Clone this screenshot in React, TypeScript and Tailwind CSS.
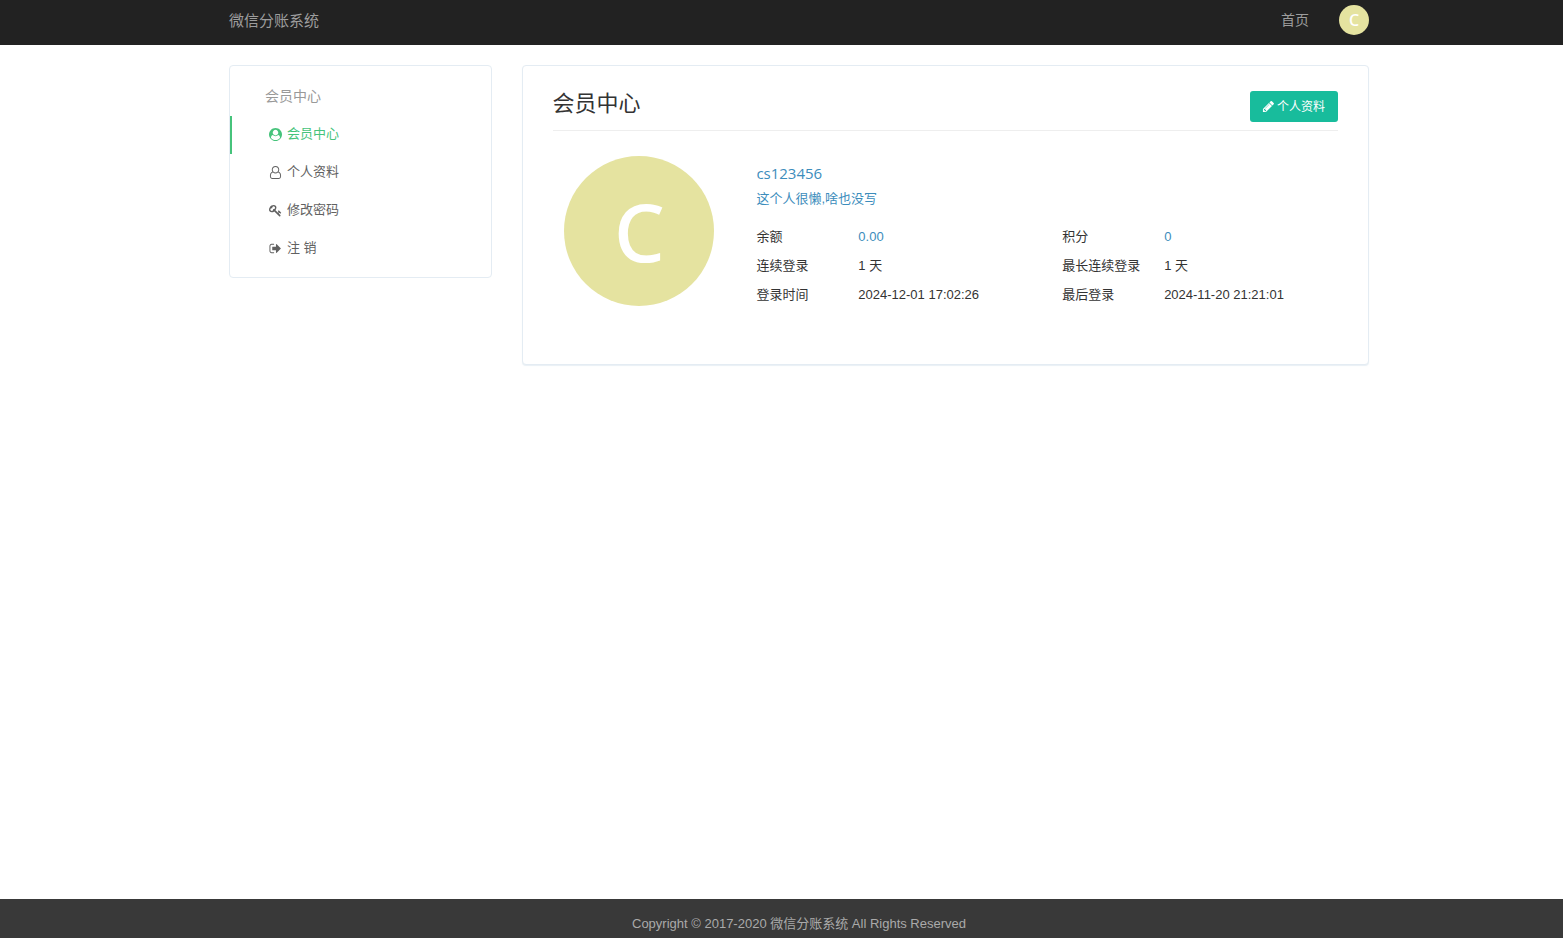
import React from 'react';
import clsx from 'clsx';

const ICONS = {
  userCircle:
    'M1523 1339q-22-155-87.5-257.5t-184.5-118.5q-67 74-159.5 115.5t-195.5 41.5-195.5-41.5-159.5-115.5q-119 16-184.5 118.5t-87.5 257.5q106 150 271 237.5t356 87.5 356-87.5 271-237.5zm-243-699q0-159-112.5-271.5t-271.5-112.5-271.5 112.5-112.5 271.5 112.5 271.5 271.5 112.5 271.5-112.5 112.5-271.5zm512 256q0 182-71 347.5t-190.5 286-285.5 191.5-349 71q-182 0-348-71t-286-191-191-286-71-348 71-348 191-286 286-191 348-71 348 71 286 191 191 286 71 348z',
  user:
    'M1329 784q47 14 89.5 38t89 73 79.5 115.5 55 172 22 236.5q0 154-100 263.5t-241 109.5h-854q-141 0-241-109.5t-100-263.5q0-131 22-236.5t55-172 79.5-115.5 89-73 89.5-38q-79-125-79-272 0-104 40.5-198.5t109.5-163.5 163.5-109.5 198.5-40.5 198.5 40.5 163.5 109.5 109.5 163.5 40.5 198.5q0 147-79 272zm-433-656q-159 0-271.5 112.5t-112.5 271.5 112.5 271.5 271.5 112.5 271.5-112.5 112.5-271.5-112.5-271.5-271.5-112.5zm427 1536q88 0 150.5-71.5t62.5-173.5q0-239-78.5-377t-225.5-145q-145 127-336 127t-336-127q-147 7-225.5 145t-78.5 377q0 102 62.5 173.5t150.5 71.5h854z',
  key:
    'M832 512q0-80-56-136t-136-56-136 56-56 136q0 42 19 83-41-19-83-19-80 0-136 56t-56 136 56 136 136 56 136-56 56-136q0-42-19-83 41 19 83 19 80 0 136-56t56-136zm851 704q0 17-49 66t-66 49q-9 0-28.5-16t-36.5-33-38.5-40-24.5-26l-96 96 220 220q28 28 28 68 0 42-39 81t-81 39q-40 0-68-28l-671-671q-176 131-365 131-163 0-265.5-102.5t-102.5-265.5q0-160 95-313t248-248 313-95q163 0 265.5 102.5t102.5 265.5q0 189-131 365l355 355 96-96q-3-3-26-24.5t-40-38.5-33-36.5-16-28.5q0-17 49-66t66-49q13 0 23 10 6 6 46 44.5t82 79.5 86.5 86 73 78 28.5 41z',
  signOut:
    'M704 1440q0 4 1 20t.5 26.5-3 23.5-10 19.5-20.5 6.5h-320q-119 0-203.5-84.5t-84.5-203.5v-704q0-119 84.5-203.5t203.5-84.5h320q13 0 22.5 9.5t9.5 22.5q0 4 1 20t.5 26.5-3 23.5-10 19.5-20.5 6.5h-320q-66 0-113 47t-47 113v704q0 66 47 113t113 47h312l11.5 1 11.5 3 8 5.5 7 9 2 13.5zm928-544q0 26-19 45l-544 544q-19 19-45 19t-45-19-19-45v-288h-448q-26 0-45-19t-19-45v-384q0-26 19-45t45-19h448v-288q0-26 19-45t45-19 45 19l544 544q19 19 19 45z',
  pencil:
    'M491 1536l91-91-235-235-91 91v107h128v128h107zm523-928q0-22-22-22-10 0-17 7l-542 542q-7 7-7 17 0 22 22 22 10 0 17-7l542-542q7-7 7-17zm-54-192l416 416-832 832h-416v-416zm683 96q0 53-37 90l-166 166-416-416 166-165q36-38 90-38 53 0 91 38l235 234q37 39 37 91z',
};

type IconName = keyof typeof ICONS;

interface MenuItem {
  icon: IconName;
  label: string;
  active?: boolean;
}

interface Stat {
  label: string;
  value: string;
  link?: boolean;
}

const MENU: MenuItem[] = [
  { icon: 'userCircle', label: '会员中心', active: true },
  { icon: 'user', label: '个人资料' },
  { icon: 'key', label: '修改密码' },
  { icon: 'signOut', label: '注 销' },
];

const STATS: Stat[] = [
  { label: '余额', value: '0.00', link: true },
  { label: '积分', value: '0', link: true },
  { label: '连续登录', value: '1 天' },
  { label: '最长连续登录', value: '1 天' },
  { label: '登录时间', value: '2024-12-01 17:02:26' },
  { label: '最后登录', value: '2024-11-20 21:21:01' },
];

const Icon = ({ name, className }: { name: IconName; className?: string }) => (
  <svg viewBox="0 0 1792 1792" fill="currentColor" aria-hidden="true" className={clsx('shrink-0', className)}>
    <path d={ICONS[name]} />
  </svg>
);

const Container = ({ className, children }: { className?: string; children: React.ReactNode }) => (
  <div className="pl-[35px]">
    <div className={clsx('mx-auto max-w-[1170px] px-[15px]', className)}>{children}</div>
  </div>
);

const Avatar = ({ className }: { className?: string }) => (
  <span
    className={clsx(
      "flex items-center justify-center rounded-full bg-[#e5e3a0] font-['Noto_Sans','Open_Sans',sans-serif] leading-none font-medium text-white",
      className
    )}
  >
    C
  </span>
);

const Navbar = () => (
  <header className="bg-[#222222] text-[#9d9d9d]">
    <Container className="flex h-[45px] items-start justify-between">
      <a href="#" className="text-[15px] leading-[42px]">微信分账系统</a>
      <nav className="flex gap-[30px]">
        <a href="#" className="text-sm leading-10">首页</a>
        <a href="#" aria-label="cs123456" className="pt-[5px]">
          <Avatar className="size-[30px] text-base" />
        </a>
      </nav>
    </Container>
  </header>
);

const Sidebar = () => (
  <aside className="self-start rounded border border-[#e4ecf3] bg-white pt-3 pb-[9px]">
    <h2 className="mb-[2px] pl-[35px] text-sm leading-9 text-[#999999]">会员中心</h2>
    <ul>
      {MENU.map((item) => (
        <li key={item.label}>
          <a
            href="#"
            className={clsx(
              'flex h-[38px] items-center gap-[5px] border-l-2 pb-[2px] pl-[37px]',
              item.active ? 'border-[#46c37b] text-[#46c37b]' : 'border-transparent text-[#616161]'
            )}
          >
            <Icon name={item.icon} className="size-[13px]" />
            {item.label}
          </a>
        </li>
      ))}
    </ul>
  </aside>
);

const Profile = () => (
  <section className="col-span-3 rounded-sm border border-[#e4ecf3] bg-white px-[30px] pt-[25px] pb-[55px] shadow-[0_1px_1px_rgba(228,236,243,0.8)]">
    <div className="flex items-start justify-between border-b border-[#eeeeee] pb-2">
      <h1 className="text-[22px] leading-[26px] text-[#333333]">会员中心</h1>
      <a
        href="#"
        className="flex h-[31px] items-center gap-[2px] rounded-[3px] bg-[#18bc9c] pr-[13px] pl-3 text-xs text-white"
      >
        <Icon name="pencil" className="size-[13px]" />
        个人资料
      </a>
    </div>

    <div className="-mx-[15px] mt-[25px] grid grid-cols-4">
      <div className="flex justify-center">
        <a href="#" aria-label="头像" className="self-start">
          <Avatar className="size-[150px] text-[80px]" />
        </a>
      </div>
      <div className="col-span-3 pt-[5px] pl-[15px]">
        <h3 className="font-['Open_Sans','Noto_Sans',sans-serif] text-[15px] leading-[25px] text-[#3c8dbc]">
          <a href="#">cs123456</a>
        </h3>
        <p className="leading-[25px] text-[#3c8dbc]">
          <a href="#">这个人很懒,啥也没写</a>
        </p>
        <dl className="mt-3 -mr-[15px] grid grid-cols-6 gap-y-px">
          {STATS.map((stat) => (
            <React.Fragment key={stat.label}>
              <dt className="leading-7 text-[#333333]">{stat.label}</dt>
              <dd className={clsx('col-span-2 leading-7', stat.link ? 'text-[#3c8dbc]' : 'text-[#333333]')}>
                {stat.link ? <a href="#">{stat.value}</a> : stat.value}
              </dd>
            </React.Fragment>
          ))}
        </dl>
      </div>
    </div>
  </section>
);

const App = () => (
  <div className="flex min-h-screen flex-col bg-white font-['Liberation_Sans','Noto_Sans_CJK_SC',sans-serif] text-[13px]">
    <Navbar />
    <main className="flex-1 pt-5">
      <Container className="grid grid-cols-4 items-start gap-[30px]">
        <Sidebar />
        <Profile />
      </Container>
    </main>
    <footer className="bg-[#393939] text-center text-[#aaaaaa]">
      <Container className="pt-[13px] pb-[2px]">
        <p className="leading-6">Copyright © 2017-2020 微信分账系统 All Rights Reserved</p>
      </Container>
    </footer>
  </div>
);

export default App;
